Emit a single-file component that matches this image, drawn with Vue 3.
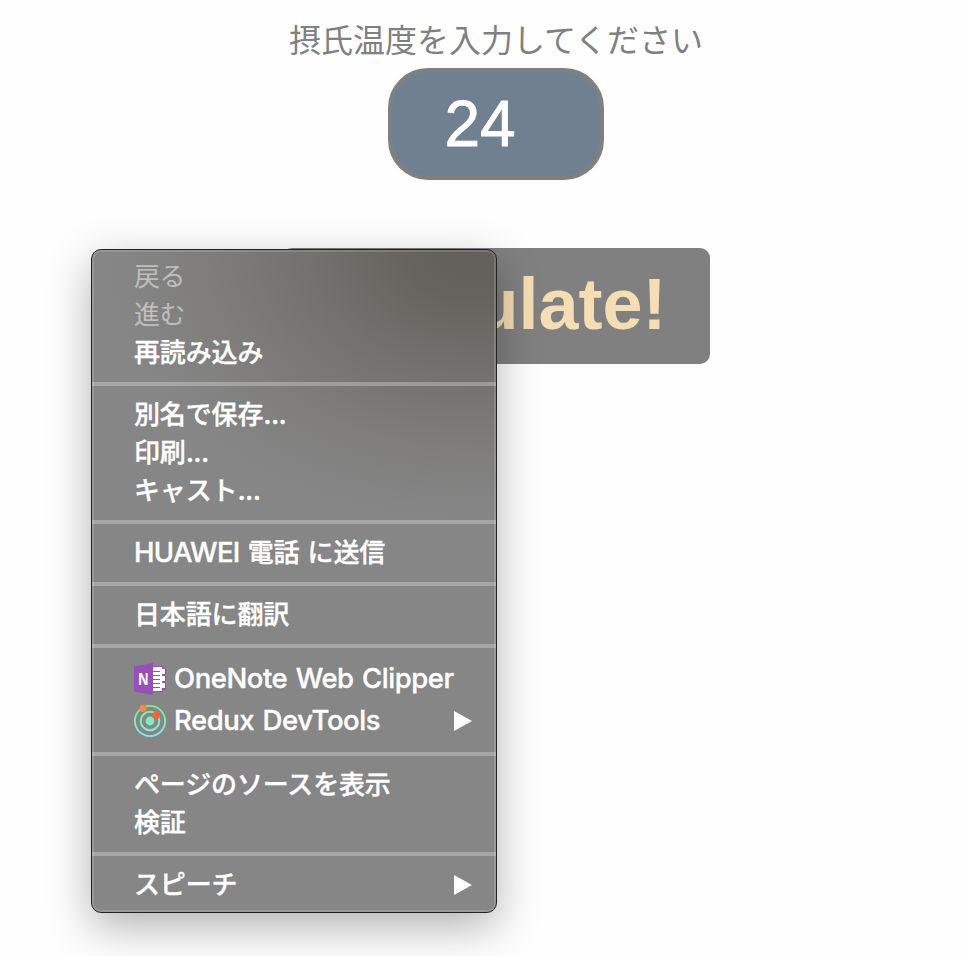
<script setup>
const groups = [
  [
    { parts: [{ t: '戻る' }], disabled: true },
    { parts: [{ t: '進む' }], disabled: true },
    { parts: [{ t: '再読み込み' }] },
  ],
  [
    { parts: [{ t: '別名で保存' }, { t: '...', latin: true }] },
    { parts: [{ t: '印刷' }, { t: '...', latin: true }] },
    { parts: [{ t: 'キャスト' }, { t: '...', latin: true }] },
  ],
  [{ parts: [{ t: 'HUAWEI ', latin: true }, { t: '電話' }, { t: ' ', latin: true }, { t: 'に送信' }] }],
  [{ parts: [{ t: '日本語に翻訳' }] }],
  [
    { parts: [{ t: 'OneNote Web Clipper', latin: true }], icon: 'onenote' },
    { parts: [{ t: 'Redux DevTools', latin: true }], icon: 'redux', submenu: true },
  ],
  [{ parts: [{ t: 'ページのソースを表示' }] }, { parts: [{ t: '検証' }] }],
  [{ parts: [{ t: 'スピーチ' }], submenu: true }],
]
</script>

<template>
  <main class="page">
    <div class="form">
      <label class="label" for="celsius">摂氏温度を入力してください</label>
      <div id="celsius" class="field">24</div>
      <button class="submit" type="button">Calculate!</button>
    </div>

    <nav class="menu">
      <ul v-for="(group, g) in groups" :key="g" class="group">
        <li
          v-for="(item, i) in group"
          :key="i"
          class="item"
          :class="{ disabled: item.disabled, tall: item.icon }"
        >
          <svg v-if="item.icon === 'onenote'" class="icon" viewBox="0 0 32 32">
            <path d="M18 3h11v2h2v1h1v21h-3v2H18z" fill="#9650b8" />
            <path d="M19 4h9v24h-9z" fill="#fff" />
            <path d="M18 8.500h8M18 12.500h8M18 16.500h8M18 20.500h8M18 24.500h8" stroke="#9650b8" stroke-width="1.200" />
            <path d="M28 6h3v5h-3zM28 13h3v5h-3zM28 20h3v5h-3z" fill="#fff" />
            <path d="M31 12h1v1h-1zM31 19h1v1h-1z" fill="#868686" />
            <path d="M0 3.500 19 0v32L0 28.500z" fill="#9650b8" />
            <text x="4" y="21.500" class="badge" textLength="10.500" lengthAdjust="spacingAndGlyphs">N</text>
          </svg>
          <svg v-else-if="item.icon === 'redux'" class="icon" viewBox="0 0 32 32">
            <defs>
              <linearGradient id="orbit" x1="0" y1="0" x2="0" y2="32" gradientUnits="userSpaceOnUse">
                <stop offset="0" stop-color="#7af08e" />
                <stop offset="1" stop-color="#7eeeea" />
              </linearGradient>
            </defs>
            <g fill="none" stroke="url(#orbit)">
              <circle cx="16" cy="16" r="15.100" stroke-width="1.800" />
              <circle cx="16" cy="16" r="9.300" stroke-width="2" />
            </g>
            <circle cx="16" cy="16" r="4.400" fill="url(#orbit)" />
            <circle cx="9" cy="3.500" r="3.400" fill="#ff8c3c" />
            <circle cx="22.300" cy="10.300" r="3.700" fill="#fb6040" />
          </svg>
          <span class="text"><span v-for="(p, k) in item.parts" :key="k" :class="{ latin: p.latin }">{{ p.t }}</span></span>
          <svg v-if="item.submenu" class="arrow" viewBox="0 0 18 20"><path d="M0 0 18 10 0 20z" fill="#fff" /></svg>
        </li>
      </ul>
    </nav>
  </main>
</template>

<style>
body {
  background: #fefefe;
}
</style>

<style scoped>
.page {
  position: relative;
  box-sizing: border-box;
  height: 956px;
  overflow: hidden;
  padding: 16px 0 0 28px;
  font-family: "Noto Sans CJK JP", sans-serif;
}
.form {
  display: flex;
  flex-direction: column;
  align-items: center;
}
.label {
  height: 52px;
  line-height: 44px;
  font-size: 32px;
  color: #808080;
  white-space: nowrap;
}
.field {
  box-sizing: border-box;
  width: 216px;
  height: 112px;
  padding: 0 0 0 52.5px;
  border: 4px solid #808080;
  border-radius: 40px;
  background: #708090;
  color: #fff;
  font: 64px/104px "Liberation Sans", sans-serif;
  -webkit-text-stroke: 0.8px #fff;
}
.submit {
  width: 428px;
  height: 116px;
  margin-top: 68px;
  padding: 0 3px 4px 0;
  border: 0;
  border-radius: 10px;
  background: #808080;
  color: #f5deb3;
  font: 700 72px/112px "Liberation Sans", sans-serif;
}
.menu {
  position: absolute;
  left: 91px;
  top: 249px;
  box-sizing: border-box;
  width: 406px;
  height: 664px;
  border: 1px solid #222;
  border-radius: 10px;
  background:
    radial-gradient(ellipse 370px 270px at 385px 0, #625f59 0%, #66635e 18%, #73716e 45%, #7f7e7d 75%, #868686 100%);
  box-shadow: inset 0 0 0 2px rgba(255, 255, 255, 0.14), 0 14px 44px rgba(0, 0, 0, 0.3);
}
.group {
  margin: 0;
  padding: 9px 24px 11px 42px;
  list-style: none;
}
.group:first-child {
  padding-top: 7px;
}
.group + .group {
  border-top: 4px solid rgba(255, 255, 255, 0.28);
}
.item {
  display: flex;
  align-items: center;
  height: 38px;
  color: #fff;
  font-size: 26px;
  font-weight: 500;
  line-height: 36px;
  letter-spacing: -0.15px;
  -webkit-text-stroke: 0.35px #fff;
}
.item.tall {
  height: 42px;
}
.item.disabled {
  color: #bebebe;
  font-weight: 400;
  letter-spacing: -0.5px;
  -webkit-text-stroke: 0;
}
.icon {
  flex: none;
  width: 32px;
  height: 32px;
  margin: 2px 8px 0 0;
  -webkit-text-stroke: 0;
}
.badge {
  fill: #fff;
  font: 700 16px "Open Sans", sans-serif;
}
.text {
  height: 38px;
  white-space: pre;
}
.latin {
  font-family: Inter, sans-serif;
  font-size: 27.5px;
  letter-spacing: -0.45px;
  word-spacing: 1.5px;
}
.item:not(.tall) .latin {
  letter-spacing: -0.7px;
}
.arrow {
  width: 18px;
  height: 20px;
  margin: 2px 0 0 auto;
}
</style>
